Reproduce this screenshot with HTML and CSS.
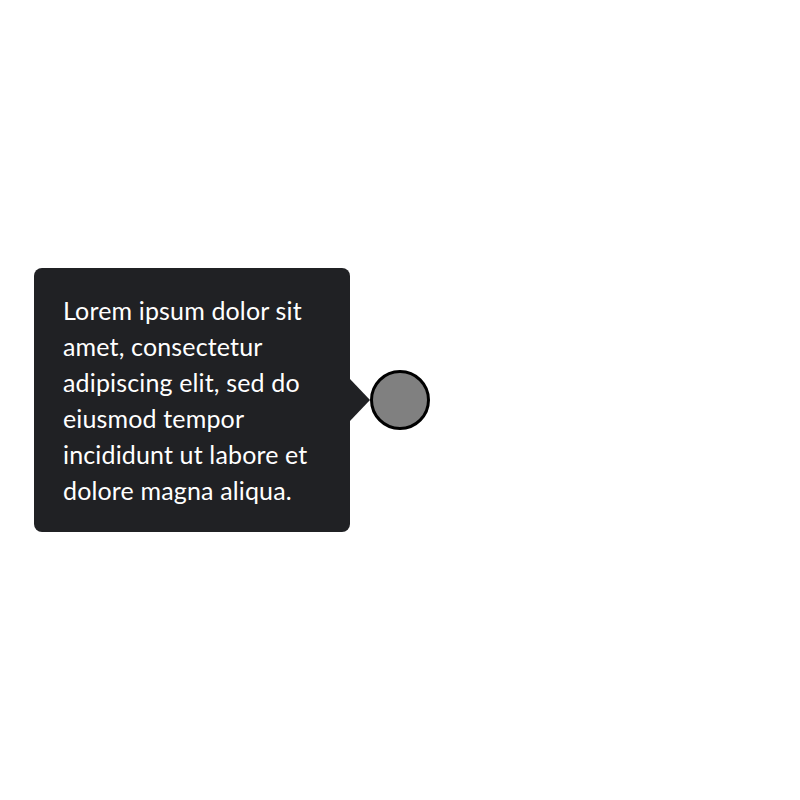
FILE: index.html
```html
<!DOCTYPE html>
<html>
<head>
<meta charset="utf-8">
<link rel="stylesheet" href="styles.css">
</head>
<body>
<div class="stage">
  <div class="anchor">
    <div class="dot"></div>
    <div class="tooltip">
      <p class="tooltip-text">Lorem ipsum dolor sit amet, consectetur adipiscing elit, sed do eiusmod tempor incididunt ut labore et dolore magna aliqua.</p>
    </div>
  </div>
</div>
</body>
</html>
```

FILE: styles.css
```css
html, body {
  margin: 0;
  padding: 0;
  background: #ffffff;
}
.stage {
  width: 800px;
  height: 800px;
  display: flex;
  align-items: center;
  justify-content: center;
}
.anchor {
  position: relative;
  width: 60px;
  height: 60px;
}
.dot {
  width: 60px;
  height: 60px;
  box-sizing: border-box;
  border: 3px solid #000000;
  border-radius: 50%;
  background: #808080;
}
.tooltip {
  position: absolute;
  right: calc(100% + 20px);
  top: 50%;
  transform: translateY(-50%);
  width: 316px;
  box-sizing: border-box;
  padding: 24px 27px 24px 29px;
  background: #202124;
  border-radius: 8px;
  color: #ffffff;
  font-family: Lato, "Open Sans", sans-serif;
  font-size: 25px;
  line-height: 36px;
  letter-spacing: 0.15px;
}
.tooltip::after {
  content: "";
  position: absolute;
  left: 100%;
  top: 50%;
  margin-top: -21px;
  border-top: 21px solid transparent;
  border-bottom: 21px solid transparent;
  border-left: 20px solid #202124;
}
.tooltip-text {
  margin: 0;
}
```
